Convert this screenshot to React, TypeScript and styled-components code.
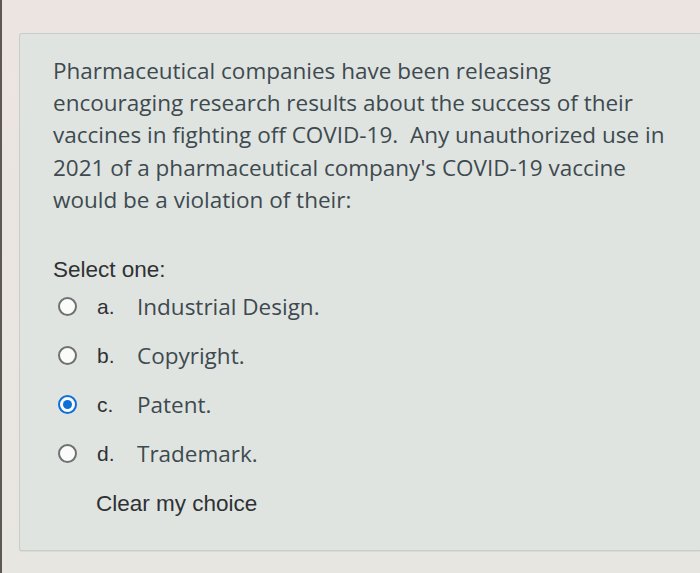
import React, { FunctionComponent } from 'react';
import styled, { createGlobalStyle } from 'styled-components';

const GlobalStyle = createGlobalStyle`
  html, body {
    margin: 0;
    padding: 0;
    width: 700px;
    height: 573px;
    overflow: hidden;
    background: linear-gradient(180deg, #ece4e1 0%, #e9e5e1 60%, #e8e6e0 100%);
  }
`;

const Page = styled('div')`
  display: flex;
  height: 573px;
  padding: 33px 0 0 0;
  box-sizing: border-box;
  border-left: 2px solid #5d5853;
`;

const Card = styled('div')`
  margin-left: 17px;
  width: 700px;
  height: 518px;
  box-sizing: border-box;
  padding: 21px 22px 0 33px;
  background: #dfe4e1;
  border: 1px solid #c8cecb;
  border-right: none;
  border-radius: 3px 0 0 3px;
  box-shadow: 0 1px 1px rgba(0, 0, 0, 0.06);
`;

const Question = styled('p')`
  margin: 0;
  font-family: 'Open Sans', sans-serif;
  font-size: 22.5px;
  line-height: 32.2px;
  color: #3e4a4f;
`;

const Prompt = styled('div')`
  margin-top: 41px;
  font-family: 'Liberation Sans', Arial, sans-serif;
  font-size: 22.5px;
  color: #2f3133;
`;

const Options = styled('div')`
  display: flex;
  flex-direction: column;
  gap: 20px;
  margin-top: 9px;
  padding-left: 5px;
`;

const Option = styled('label')`
  display: flex;
  align-items: center;
  height: 29px;
`;

const Radio = styled('span')<{ $checked?: boolean }>`
  width: 19px;
  height: 19px;
  box-sizing: border-box;
  border-radius: 50%;
  border: ${(p) => (p.$checked ? '2.5px solid #0e6fd8' : '2px solid #6f7070')};
  background: #fbfbfb;
  display: flex;
  align-items: center;
  justify-content: center;
  flex-shrink: 0;
  &::after {
    content: '';
    display: ${(p) => (p.$checked ? 'block' : 'none')};
    width: 9px;
    height: 9px;
    border-radius: 50%;
    background: #0e6fd8;
  }
`;

const Letter = styled('span')`
  width: 34px;
  margin-left: 20px;
  font-family: 'Liberation Sans', Arial, sans-serif;
  font-size: 21px;
  color: #2f3133;
`;

const OptionText = styled('span')`
  margin-left: 6px;
  font-family: 'Open Sans', sans-serif;
  font-size: 22.5px;
  color: #3e4a4f;
`;

const Clear = styled('div')`
  margin-top: 23px;
  padding-left: 43px;
  font-family: 'Liberation Sans', Arial, sans-serif;
  font-size: 22.5px;
  color: #2f3133;
`;

const choices = [
  { letter: 'a.', text: 'Industrial Design.' },
  { letter: 'b.', text: 'Copyright.' },
  { letter: 'c.', text: 'Patent.', checked: true },
  { letter: 'd.', text: 'Trademark.' },
];

const App: FunctionComponent = () => {
  return (
    <Page>
      <GlobalStyle />
      <Card>
        <Question>
          Pharmaceutical companies have been releasing encouraging research results about the
          success of their vaccines in fighting off COVID-19.&nbsp; Any unauthorized use in 2021
          of a pharmaceutical company's COVID-19 vaccine would be a violation of their:
        </Question>
        <Prompt>Select one:</Prompt>
        <Options>
          {choices.map((c) => (
            <Option key={c.letter}>
              <Radio $checked={c.checked} />
              <Letter>{c.letter}</Letter>
              <OptionText>{c.text}</OptionText>
            </Option>
          ))}
        </Options>
        <Clear>Clear my choice</Clear>
      </Card>
    </Page>
  );
};

export default App;
